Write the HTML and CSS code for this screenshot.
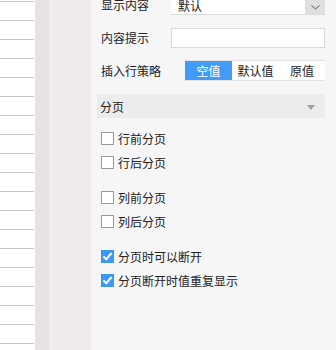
FILE: index.html
```html
<!DOCTYPE html>
<html lang="zh-CN">
<head>
    <meta charset="UTF-8">
    <title>属性面板</title>
    <link rel="stylesheet" href="styles.css">
</head>
<body>
    <div class="sheet"></div>
    <div class="gutter"></div>
    <div class="strip"></div>

    <div class="panel">
        <div class="row first">
            <span class="label">显示内容</span>
            <div class="select">
                <span class="select-text">默认</span>
                <span class="select-arrow">
                    <svg width="9" height="5" viewBox="0 0 9 5"><path d="M0.5 0.5 L4.5 4 L8.5 0.5" fill="none" stroke="#555" stroke-width="1"/></svg>
                </span>
            </div>
        </div>
        <div class="row">
            <span class="label">内容提示</span>
            <input class="text-input" type="text">
        </div>
        <div class="row">
            <span class="label">插入行策略</span>
            <div class="segments">
                <span class="seg active">空值</span>
                <span class="seg">默认值</span>
                <span class="seg">原值</span>
            </div>
        </div>

        <div class="section-head">
            <span>分页</span>
            <span class="caret"></span>
        </div>

        <div class="checks">
            <label class="check"><span class="box"></span>行前分页</label>
            <label class="check"><span class="box"></span>行后分页</label>
        </div>
        <div class="checks">
            <label class="check"><span class="box"></span>列前分页</label>
            <label class="check"><span class="box"></span>列后分页</label>
        </div>
        <div class="checks">
            <label class="check"><span class="box on"></span>分页时可以断开</label>
            <label class="check"><span class="box on"></span>分页断开时值重复显示</label>
        </div>
    </div>
</body>
</html>
```

FILE: styles.css
```css
html, body {
    margin: 0;
    padding: 0;
    height: 100%;
    overflow: hidden;
}

body {
    display: flex;
    width: 336px;
    height: 350px;
    font-family: "Noto Sans CJK SC", "Microsoft YaHei", sans-serif;
    font-size: 12px;
    color: #222;
}

.sheet {
    width: 34px;
    margin-right: 1px;
    background-color: #fff;
    background-image: linear-gradient(to bottom, #c6c6c6 0, #c6c6c6 1px, transparent 1px);
    background-size: 100% 19px;
    background-position: 0 1px;
}

.gutter {
    width: 15px;
    background-color: #e6e1e5;
    border-right: 1px solid #f8f5f7;
}

.strip {
    width: 40px;
    background-color: #efeaee;
}

.panel {
    flex: 1;
    background-color: #f6f6f6;
    padding: 0 11px 0 10px;
}

.row {
    display: flex;
    align-items: center;
    justify-content: space-between;
    height: 20px;
    margin-bottom: 13px;
}

.row.first {
    margin-top: -5px;
}

.row:nth-child(3) {
    height: 21px;
    margin-top: -1px;
}

.label {
    line-height: 20px;
}

.select {
    width: 154px;
    height: 20px;
    box-sizing: border-box;
    display: flex;
    background: #fff;
    border-bottom: 1px solid #dcdcdc;
}

.select-text {
    flex: 1;
    padding-left: 7px;
    line-height: 22px;
}

.select-arrow {
    width: 20px;
    background: #e1dee1;
    display: flex;
    align-items: center;
    justify-content: center;
    padding-top: 5px;
    box-sizing: border-box;
}

.text-input {
    width: 154px;
    height: 20px;
    box-sizing: border-box;
    border: 1px solid #dadada;
    background: #fff;
    margin: 0;
    padding: 0 6px;
    outline: none;
}

.segments {
    width: 140px;
    height: 21px;
    box-sizing: border-box;
    display: flex;
    background: #fff;
    border-top: 1px solid #e2e2e2;
    border-bottom: 1px solid #e2e2e2;
}

.seg {
    width: 47px;
    text-align: center;
    line-height: 19px;
}

.seg:last-child {
    width: 46px;
}

.seg.active {
    background: #419bf9;
    color: #fff;
}

.section-head {
    display: flex;
    align-items: center;
    justify-content: space-between;
    height: 24px;
    margin: 7px 0 0 -4px;
    padding: 0 10px 0 3px;
    background: #ececec;
}

.caret {
    width: 0;
    height: 0;
    border-left: 4px solid transparent;
    border-right: 4px solid transparent;
    border-top: 5px solid #a0a0a0;
    margin-top: 2px;
}

.checks {
    display: flex;
    flex-direction: column;
    gap: 4px;
    padding-top: 10px;
    margin-bottom: 5px;
}

.check {
    display: flex;
    align-items: center;
    gap: 4px;
    height: 20px;
}

.box {
    width: 13px;
    height: 13px;
    box-sizing: border-box;
    border: 1px solid #9a9a9a;
    background: #fff;
    position: relative;
}

.box.on {
    border-color: #3d97f7;
    background: #3d97f7;
}

.box.on::after {
    content: "";
    position: absolute;
    left: 3px;
    top: 0px;
    width: 3px;
    height: 7px;
    border: solid #fff;
    border-width: 0 2px 2px 0;
    transform: rotate(40deg);
}
```
